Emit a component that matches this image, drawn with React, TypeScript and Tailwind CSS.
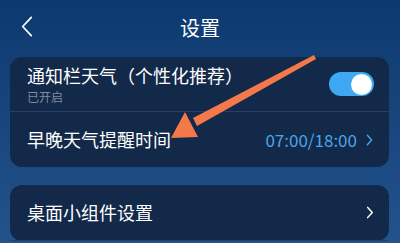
import React from "react";

const font = { fontFamily: '"Noto Sans CJK SC", "Noto Sans", sans-serif' };

const Chevron: React.FC<{ className?: string }> = ({ className }) => (
  <svg viewBox="0 0 8 14" className={className} fill="none" stroke="currentColor" strokeWidth="1.6" strokeLinecap="round" strokeLinejoin="round">
    <path d="M1.5 1.5 L6.5 7 L1.5 12.5" />
  </svg>
);

const App: React.FC = () => {
  return (
    <div
      className="relative w-[400px] h-[243px] overflow-hidden bg-gradient-to-b from-[#0c396f] to-[#24528b] text-white"
      style={font}
    >
      {/* header */}
      <div className="relative flex h-[55px] items-center justify-center">
        <svg viewBox="0 0 12 22" className="absolute left-[21px] top-[16px] h-[21px] w-[12px]" fill="none" stroke="white" strokeWidth="1.8" strokeLinecap="round" strokeLinejoin="round">
          <path d="M10.5 1.5 L1.5 11 L10.5 20.5" />
        </svg>
        <span className="text-[20px] leading-none">设置</span>
      </div>

      <div className="flex flex-col gap-[18px] pl-[10px] pr-[11px] pt-[2px]">
        <div className="rounded-[12px] bg-[#12294a]">
          <div className="flex h-[55px] items-center justify-between border-b border-[#253f66] pl-[17px] pr-[15px]">
            <div className="flex flex-col">
              <span className="text-[18px] leading-[22px]">通知栏天气（个性化推荐）</span>
              <span className="mt-[3px] text-[12px] leading-[16px] text-[#7f8ca0]">已开启</span>
            </div>
            <div className="flex h-[24px] w-[45px] items-center justify-end rounded-full bg-[#3ea8f3] pr-[2px]">
              <div className="h-[21px] w-[21px] rounded-full bg-white" />
            </div>
          </div>
          <div className="flex h-[55px] items-center justify-between pl-[17px] pr-[16px]">
            <span className="text-[18px]">早晚天气提醒时间</span>
            <div className="flex items-center gap-[9px] text-[#4aa6e6]">
              <span className="text-[17px]">07:00/18:00</span>
              <Chevron className="h-[12px] w-[7px]" />
            </div>
          </div>
        </div>

        <div className="rounded-[12px] bg-[#13294a]">
          <div className="flex h-[56px] items-center justify-between border-b border-[#253f66] pl-[17px] pr-[15px]">
            <span className="text-[18px]">桌面小组件设置</span>
            <Chevron className="h-[13px] w-[8px] text-white" />
          </div>
        </div>
      </div>

      {/* orange annotation arrow */}
      <svg className="pointer-events-none absolute left-0 top-0" width="400" height="243" viewBox="0 0 400 243">
        <polygon points="314,55 316,59 197,126 193,118" fill="#f4794a" />
        <polygon points="171,138 185,112 198,137" fill="#f4794a" />
      </svg>
    </div>
  );
};

export default App;
